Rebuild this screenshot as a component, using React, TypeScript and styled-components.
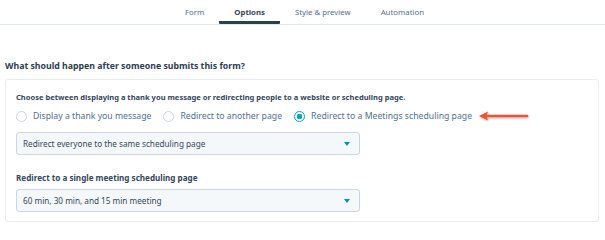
import React, { useState } from 'react';
import styled, { createGlobalStyle } from 'styled-components';

const GlobalStyle = createGlobalStyle`
	html, body {
		margin: 0;
		padding: 0;
		background: #ffffff;
	}
	body {
		font-family: 'Noto Sans', 'Open Sans', sans-serif;
		color: #33475b;
		width: 605px;
		overflow: hidden;
	}
	* {
		box-sizing: border-box;
	}
`;

const tabs = ['Form', 'Options', 'Style & preview', 'Automation'];

const options = [
	'Display a thank you message',
	'Redirect to another page',
	'Redirect to a Meetings scheduling page',
];

function App() {
	const [active, setActive] = useState('Options');
	const [choice, setChoice] = useState(2);

	return (
		<>
			<GlobalStyle />
			<TabBar>
				{tabs.map((tab) => (
					<Tab key={tab} active={active === tab} onClick={() => setActive(tab)}>
						{tab}
					</Tab>
				))}
			</TabBar>
			<Page>
				<Heading>What should happen after someone submits this form?</Heading>
				<Card>
					<Label>
						Choose between displaying a thank you message or redirecting people to a website or
						scheduling page.
					</Label>
					<RadioRow>
						{options.map((opt, i) => (
							<RadioOption key={opt} onClick={() => setChoice(i)}>
								<RadioCircle checked={choice === i} />
								{opt}
							</RadioOption>
						))}
						<Arrow width="52" height="12" viewBox="0 0 52 12">
							<defs>
								<filter id="shadow" x="-10%" y="-50%" width="120%" height="200%">
									<feDropShadow dx="0.5" dy="1" stdDeviation="0.8" floodColor="#000" floodOpacity="0.3" />
								</filter>
							</defs>
							<g filter="url(#shadow)">
								<path d="M8 6 H49" stroke="#f0522d" strokeWidth="2.6" strokeLinecap="round" />
								<path d="M1 6 L10 1.5 L8.5 6 L10 10.5 Z" fill="#f0522d" />
							</g>
						</Arrow>
					</RadioRow>
					<Select>
						<span>Redirect everyone to the same scheduling page</span>
						<Caret />
					</Select>
					<SubLabel>Redirect to a single meeting scheduling page</SubLabel>
					<Select>
						<span>60 min, 30 min, and 15 min meeting</span>
						<Caret />
					</Select>
				</Card>
			</Page>
		</>
	);
}

const TabBar = styled.div`
	display: flex;
	justify-content: center;
	height: 25px;
	border-bottom: 1px solid #e3e8ee;
	padding-left: 4px;
`;

const Tab = styled.div<{ active: boolean }>`
	padding: 7px 15px 0;
	font-size: 7.8px;
	font-weight: ${(p) => (p.active ? 700 : 400)};
	color: ${(p) => (p.active ? '#33475b' : '#516f90')};
	border-bottom: 3px solid ${(p) => (p.active ? '#2d3e50' : 'transparent')};
	border-radius: 1px;
	cursor: pointer;
`;

const Page = styled.div`
	padding: 35px 6px 0 5px;
`;

const Heading = styled.h2`
	margin: 0 0 7px;
	font-size: 8.75px;
	font-weight: 700;
	color: #2d3e50;
`;

const Card = styled.div`
	border: 1px solid #e9edf2;
	border-radius: 3px;
	padding: 12px 10px 9px;
`;

const Label = styled.div`
	font-size: 7.55px;
	font-weight: 700;
	color: #33475b;
	line-height: 11px;
`;

const RadioRow = styled.div`
	display: flex;
	align-items: center;
	gap: 12px;
	margin: 6px 0 9px;
	height: 14px;
`;

const RadioOption = styled.label`
	display: flex;
	align-items: center;
	gap: 6px;
	font-size: 8.7px;
	color: #516f90;
	cursor: pointer;
`;

const RadioCircle = styled.span<{ checked: boolean }>`
	width: 11px;
	height: 11px;
	border-radius: 50%;
	border: 1px solid ${(p) => (p.checked ? '#00a4bd' : '#cbd6e2')};
	background: ${(p) =>
		p.checked ? 'radial-gradient(circle, #00a4bd 0 2.6px, #fff 3px)' : '#fff'};
	flex-shrink: 0;
`;

const Arrow = styled.svg`
	margin-left: -6px;
`;

const Select = styled.div`
	display: flex;
	align-items: center;
	justify-content: space-between;
	width: 344px;
	height: 23px;
	padding: 0 9px 0 6px;
	background: #f5f8fa;
	border: 1px solid #cbd6e2;
	border-radius: 3px;
	font-size: 8.2px;
	color: #33475b;
`;

const Caret = styled.span`
	width: 0;
	height: 0;
	border-left: 3.5px solid transparent;
	border-right: 3.5px solid transparent;
	border-top: 4px solid #0091ae;
`;

const SubLabel = styled.div`
	margin: 17px 0 5px;
	font-size: 8.1px;
	font-weight: 700;
	color: #33475b;
	line-height: 12px;
`;

export default App;
